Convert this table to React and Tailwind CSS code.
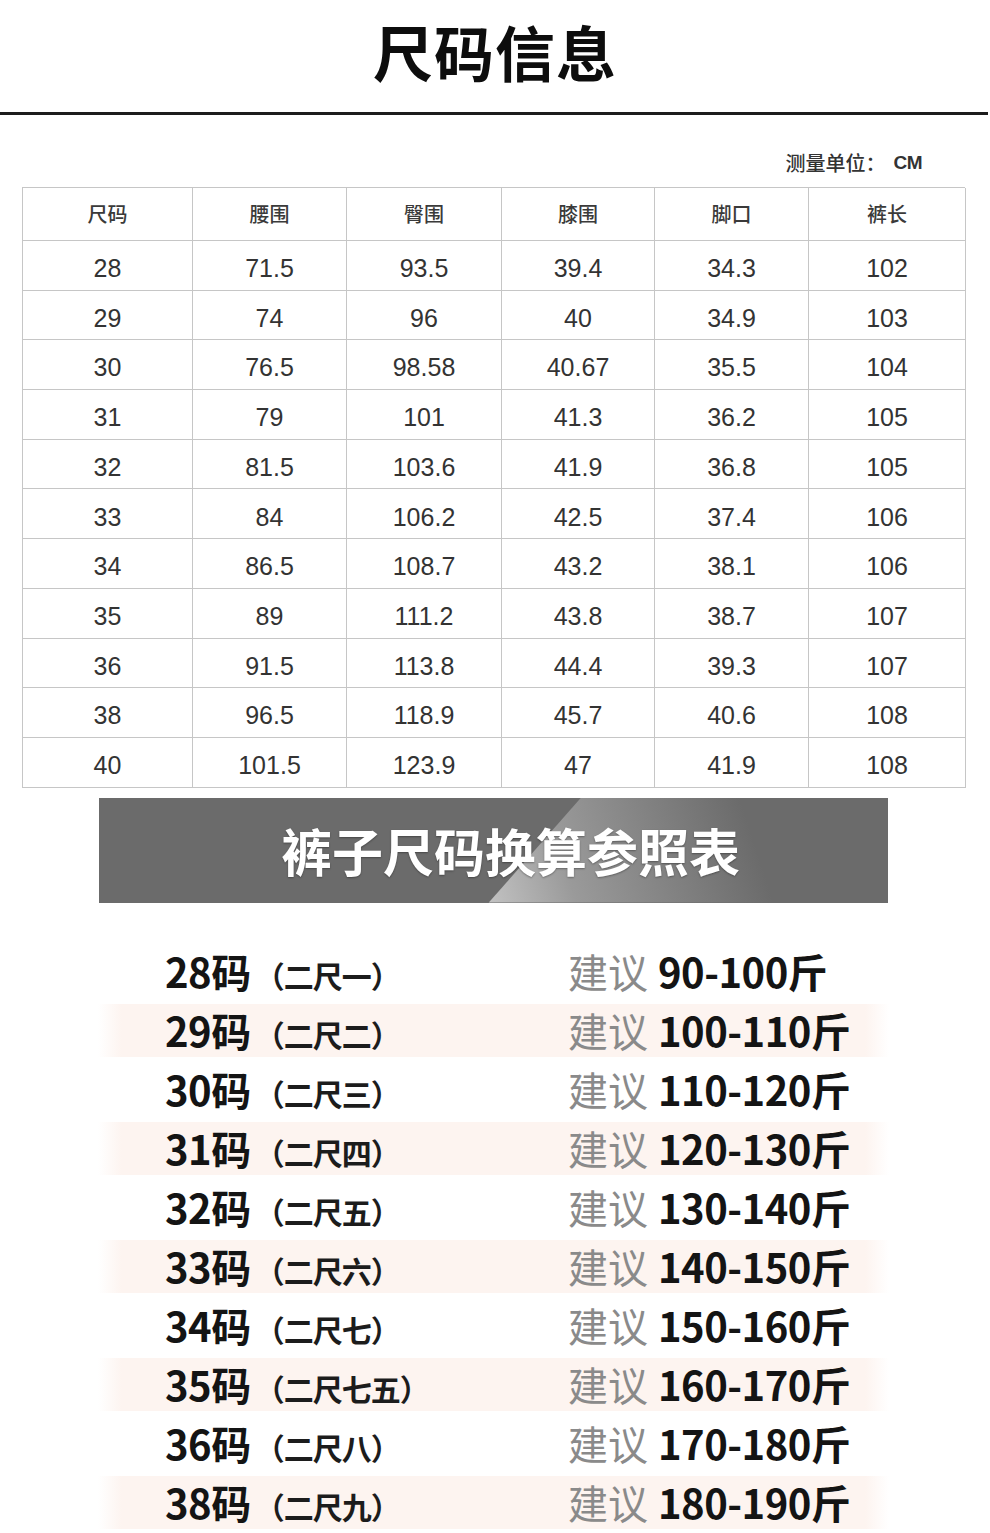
import React from "react";

const rows = [
  ["28", "71.5", "93.5", "39.4", "34.3", "102"],
  ["29", "74", "96", "40", "34.9", "103"],
  ["30", "76.5", "98.58", "40.67", "35.5", "104"],
  ["31", "79", "101", "41.3", "36.2", "105"],
  ["32", "81.5", "103.6", "41.9", "36.8", "105"],
  ["33", "84", "106.2", "42.5", "37.4", "106"],
  ["34", "86.5", "108.7", "43.2", "38.1", "106"],
  ["35", "89", "111.2", "43.8", "38.7", "107"],
  ["36", "91.5", "113.8", "44.4", "39.3", "107"],
  ["38", "96.5", "118.9", "45.7", "40.6", "108"],
  ["40", "101.5", "123.9", "47", "41.9", "108"],
];

const headers = ["尺码", "腰围", "臀围", "膝围", "脚口", "裤长"];

const list = [
  ["28", "二尺一", "90-100"],
  ["29", "二尺二", "100-110"],
  ["30", "二尺三", "110-120"],
  ["31", "二尺四", "120-130"],
  ["32", "二尺五", "130-140"],
  ["33", "二尺六", "140-150"],
  ["34", "二尺七", "150-160"],
  ["35", "二尺七五", "160-170"],
  ["36", "二尺八", "170-180"],
  ["38", "二尺九", "180-190"],
];

const cjk = "font-['Noto_Sans_CJK_SC','Noto_Sans',sans-serif]";
const latin = "font-['Liberation_Sans','Noto_Sans_CJK_SC',sans-serif]";

export default function App() {
  return (
    <div className={`w-[990px] h-[1533px] bg-white overflow-hidden ${cjk}`}>
      {/* Title */}
      <div className="h-[112px] flex justify-center pt-[13px]">
        <h1 className="text-[60px] leading-[76px] font-bold text-[#0d0d0d] tracking-[1px]">尺码信息</h1>
      </div>
      <div className="w-[988px] h-[3px] bg-[#1c1c1c]" />

      {/* Unit */}
      <div className="mt-[36px] h-[24px] flex justify-end items-center pr-[68px] text-[20px] leading-[24px] text-[#333] font-medium">
        <span>测量单位：</span>
        <span className={`${latin} ml-[8px] text-[19px] font-semibold tracking-[-0.5px]`}>CM</span>
      </div>

      {/* Table */}
      <div className="mt-[12px] ml-[22px] w-[943px] grid grid-cols-[170px_154px_155px_153px_154px_157px] border-l border-t border-[#c6c6c6]">
        {headers.map((h) => (
          <div
            key={h}
            className="h-[53px] flex items-center justify-center border-r border-b border-[#c6c6c6] text-[20px] font-medium text-[#3a3a3a]"
          >
            {h}
          </div>
        ))}
        {rows.map((r, i) =>
          r.map((c, j) => (
            <div
              key={i + "-" + j}
              className={`h-[49.7px] pt-[7px] flex items-center justify-center border-r border-b border-[#c6c6c6] text-[25px] text-[#333] ${latin}`}
            >
              {c}
            </div>
          ))
        )}
      </div>

      {/* Banner */}
      <div className="mt-[10px] ml-[99px] w-[789px] h-[105px] relative bg-[#6b6b6b] overflow-hidden">
        <div className="absolute inset-0 [clip-path:polygon(61.1%_0,100%_0,100%_100%,49.4%_100%)] bg-[linear-gradient(72deg,#d6d6d6_42%,#9a9a9a_58%,#6b6b6b_82%)]" />
        <div className="relative h-full flex items-center justify-center pl-[34px]">
          <span className="text-[51px] leading-none font-bold text-white [text-shadow:0_1px_2px_rgba(0,0,0,0.35)]">
            裤子尺码换算参照表
          </span>
        </div>
      </div>

      {/* Conversion list */}
      <div className="mt-[39px] ml-[98px] w-[791px]">
        {list.map(([size, chi, w], i) => (
          <div key={size} className="h-[59px] py-[3px]">
            <div
              className={`h-[53px] flex items-center ${i % 2 === 1 ? "bg-[linear-gradient(90deg,#fff_0%,#fdf4f0_3%,#fdf4f0_97%,#fff_100%)]" : ""}`}
            >
              <div className="w-[470px] pl-[67px] flex items-baseline">
                <span className="text-[40px] leading-none font-bold text-[#141414] tracking-[-0.5px]">{size}码</span>
                <span className="ml-[4px] text-[30px] leading-none font-semibold text-[#1c1c1c] tracking-[-1px]">（{chi}）</span>
              </div>
              <div className="flex items-baseline">
                <span className="text-[40px] leading-none text-[#8a8a8a]">建议</span>
                <span className="ml-[10px] text-[40px] leading-none font-bold text-[#141414] tracking-[-0.5px]">
                  {w}斤
                </span>
              </div>
            </div>
          </div>
        ))}
      </div>
    </div>
  );
}
